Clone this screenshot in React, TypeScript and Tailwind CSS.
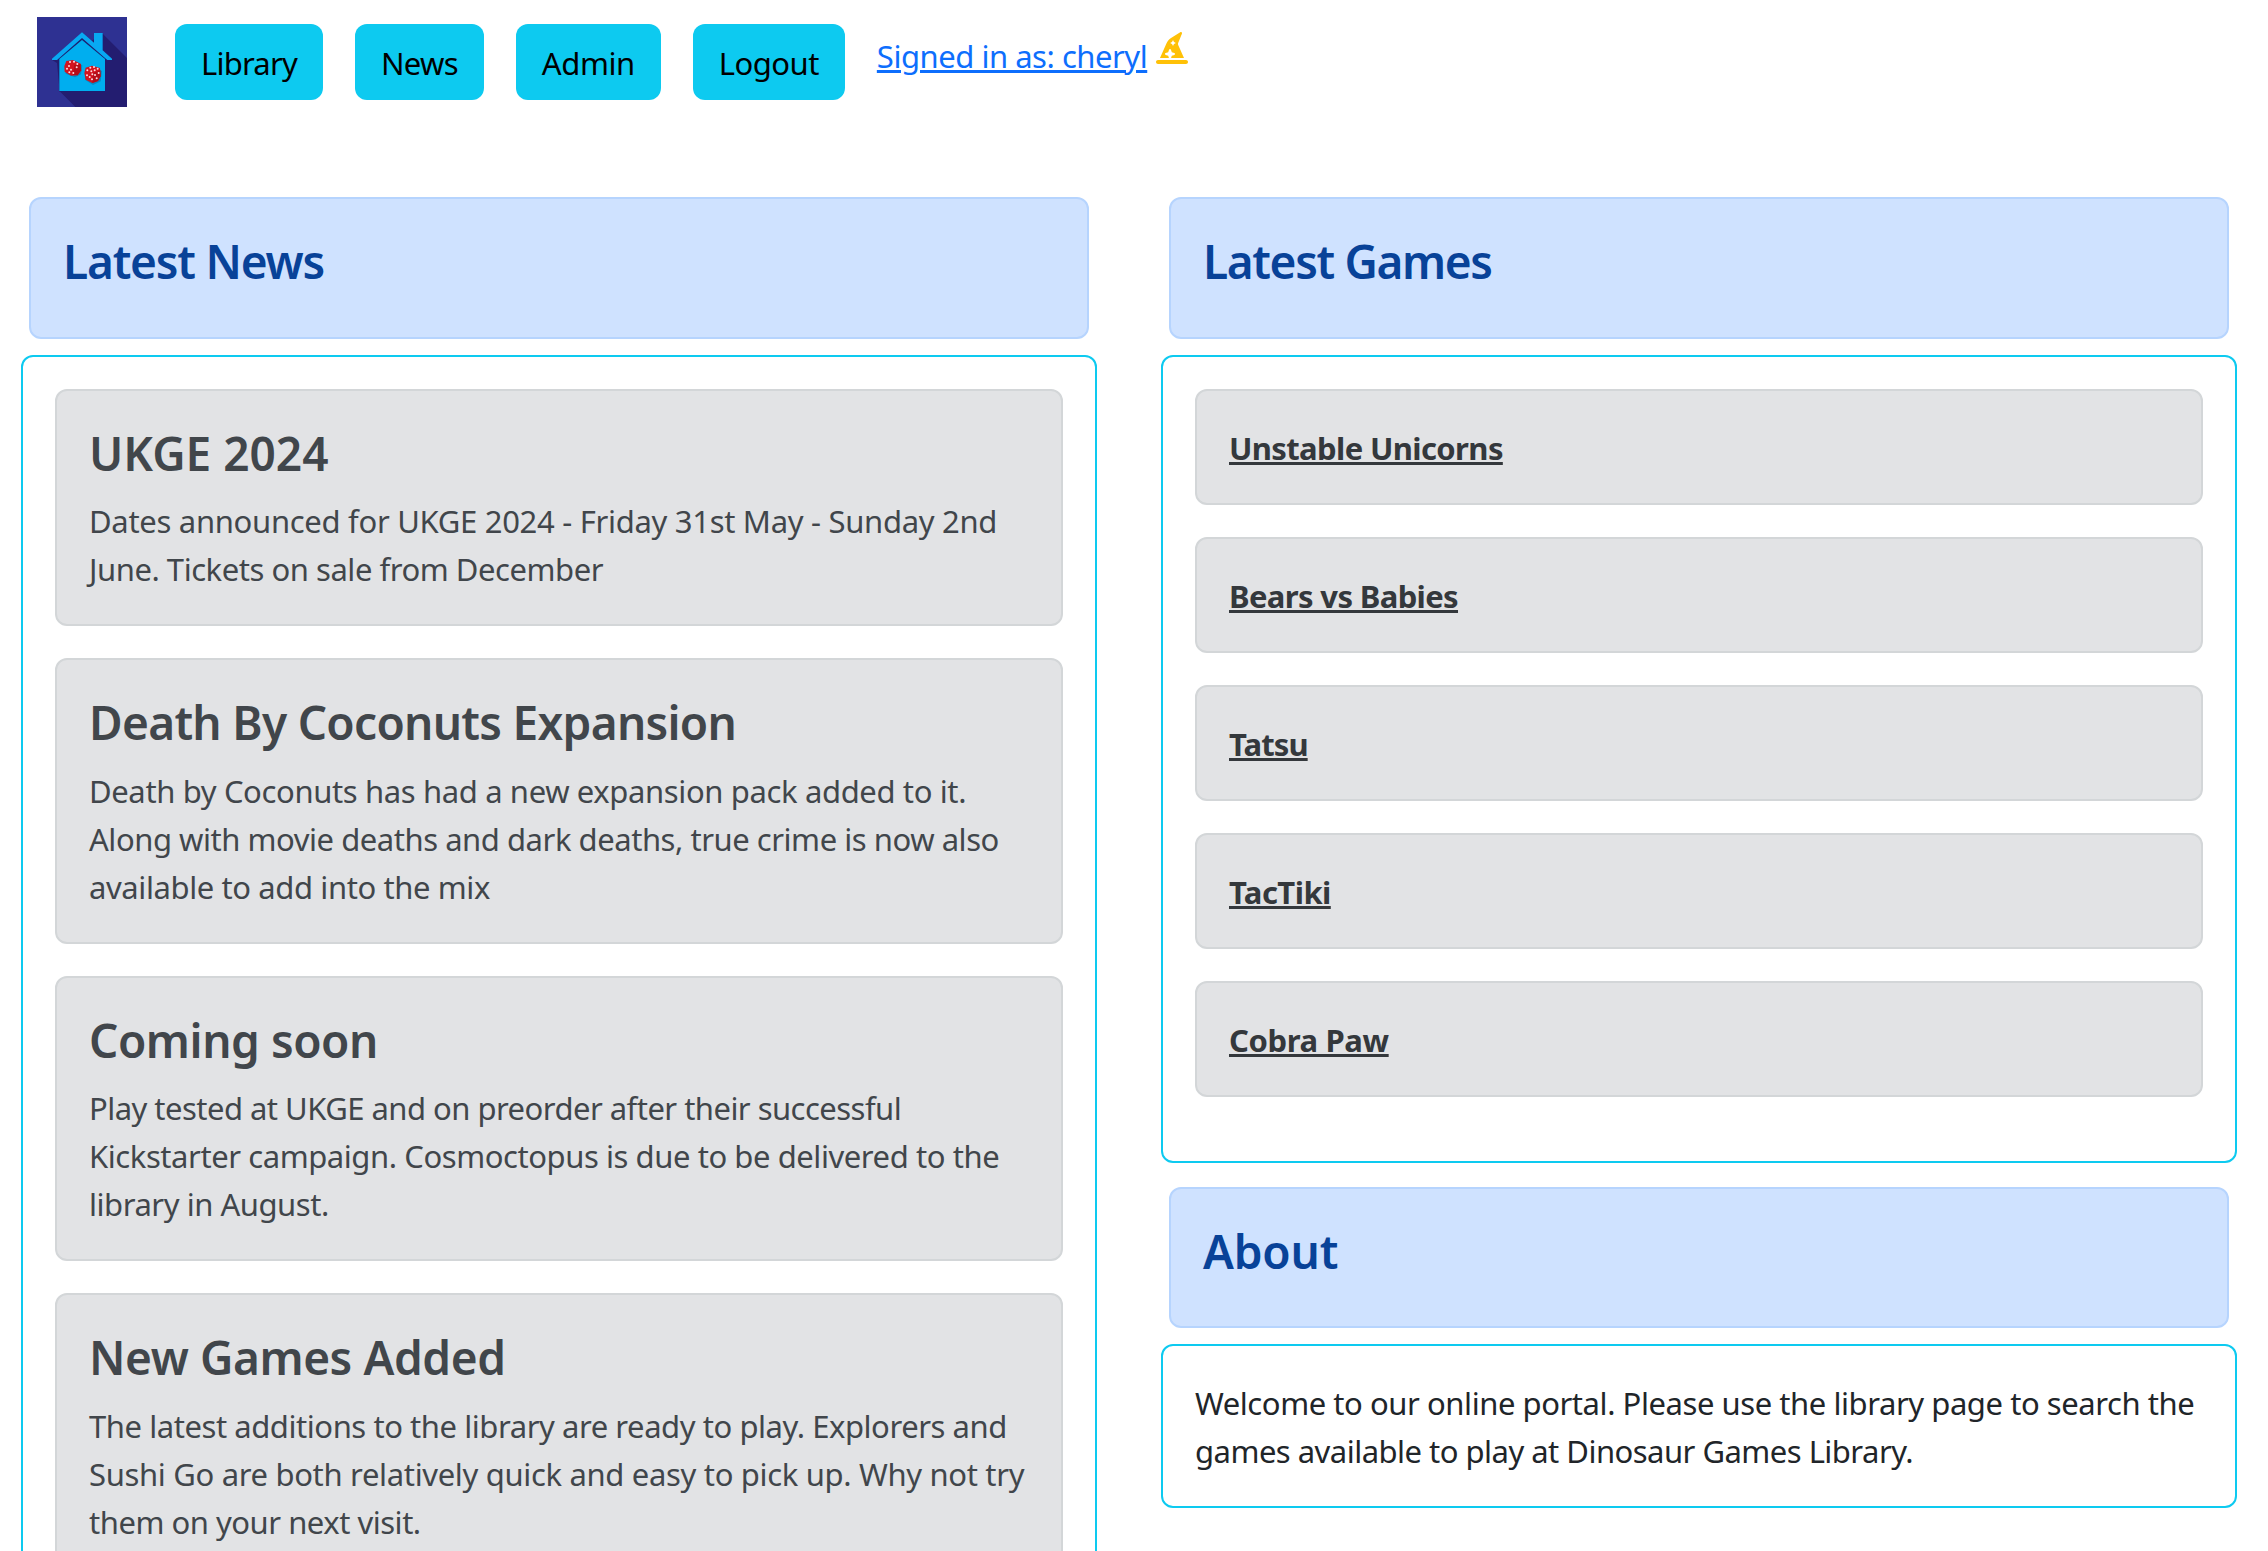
import { FaHatWizard } from 'react-icons/fa6';

type Line = { text: string; tracking: string };
type NewsItem = { title: Line; body: Line[] };

const nav: Line[] = [
  { text: 'Library', tracking: 'tracking-[-0.79px]' },
  { text: 'News', tracking: 'tracking-[-0.7px]' },
  { text: 'Admin', tracking: 'tracking-[-0.4px]' },
  { text: 'Logout', tracking: 'tracking-[-0.53px]' },
];

const news: NewsItem[] = [
  {
    title: { text: 'UKGE 2024', tracking: 'tracking-[0px]' },
    body: [
      { text: 'Dates announced for UKGE 2024 - Friday 31st May - Sunday 2nd', tracking: 'tracking-[-0.3px]' },
      { text: 'June. Tickets on sale from December', tracking: 'tracking-[-0.46px]' },
    ],
  },
  {
    title: { text: 'Death By Coconuts Expansion', tracking: 'tracking-[-0.7px]' },
    body: [
      { text: 'Death by Coconuts has had a new expansion pack added to it.', tracking: 'tracking-[-0.37px]' },
      { text: 'Along with movie deaths and dark deaths, true crime is now also', tracking: 'tracking-[-0.46px]' },
      { text: 'available to add into the mix', tracking: 'tracking-[-0.4px]' },
    ],
  },
  {
    title: { text: 'Coming soon', tracking: 'tracking-[-0.44px]' },
    body: [
      { text: 'Play tested at UKGE and on preorder after their successful', tracking: 'tracking-[-0.53px]' },
      { text: 'Kickstarter campaign. Cosmoctopus is due to be delivered to the', tracking: 'tracking-[-0.43px]' },
      { text: 'library in August.', tracking: 'tracking-[-0.46px]' },
    ],
  },
  {
    title: { text: 'New Games Added', tracking: 'tracking-[-0.42px]' },
    body: [
      { text: 'The latest additions to the library are ready to play. Explorers and', tracking: 'tracking-[-0.44px]' },
      { text: 'Sushi Go are both relatively quick and easy to pick up. Why not try', tracking: 'tracking-[-0.33px]' },
      { text: 'them on your next visit.', tracking: 'tracking-[-0.48px]' },
    ],
  },
];

const games: Line[] = [
  { text: 'Unstable Unicorns', tracking: 'tracking-[-0.62px]' },
  { text: 'Bears vs Babies', tracking: 'tracking-[-0.64px]' },
  { text: 'Tatsu', tracking: 'tracking-[-0.9px]' },
  { text: 'TacTiki', tracking: 'tracking-[-0.55px]' },
  { text: 'Cobra Paw', tracking: 'tracking-[-0.38px]' },
];

const about: Line[] = [
  { text: 'Welcome to our online portal. Please use the library page to search the', tracking: 'tracking-[-0.44px]' },
  { text: 'games available to play at Dinosaur Games Library.', tracking: 'tracking-[-0.52px]' },
];

const dieOnePips = [
  [99, 135], [111, 134], [121, 141], [96, 147], [90, 155], [102, 158], [97, 166], [109, 168], [119, 151],
];
const dieTwoPips = [
  [160, 152], [171, 150], [182, 155], [151, 160], [163, 163], [173, 160], [150, 175], [158, 180], [165, 187],
  [174, 174], [185, 168], [179, 184], [166, 172],
];

function Logo() {
  return (
    <svg viewBox="0 0 270 270" className="mt-[17px] size-[90px] shrink-0">
      <rect width="270" height="270" fill="#2e3192" />
      <path d="M197 50L270 123V270H115L68 223L60 138L45 129L120 100Z" fill="#231d70" />
      <path d="M135 58L60 122L67 131V224H204V131L211 122Z" fill="#1c2070" />
      <path d="M67 126L135 69L204 126V222H67Z" fill="#00aeef" />
      <path d="M135 46L171 77V48H197V100L225 125V129H211L135 63L60 129H45V125Z" fill="#08a9f2" />
      <path d="M88 136L112 132L136 145L132 172L114 181L86 170Z" fill="#0873a8" opacity="0.6" />
      <path d="M146 152L170 150L195 162L191 193L168 204L144 188Z" fill="#0873a8" opacity="0.6" />
      <path d="M88 132L108 129L131 140L133 160L122 175L102 176L83 164L82 147Z" fill="#d3141f" />
      <path d="M112 144L131 141L132 160L122 175L108 173Z" fill="#b50d18" />
      <path d="M146 152L165 146L189 153L191 176L183 192L166 198L146 188L142 168Z" fill="#d3141f" />
      <path d="M168 168L190 160L191 178L183 192L166 198Z" fill="#b50d18" />
      {[...dieOnePips, ...dieTwoPips].map(([x, y]) => (
        <circle key={`${x}-${y}`} cx={x} cy={y} r="3" fill="#ffd9dc" />
      ))}
    </svg>
  );
}

function Lines({ lines }: { lines: Line[] }) {
  return (
    <p className="-mb-px pt-px whitespace-nowrap">
      {lines.map((line) => (
        <span key={line.text} className={`block ${line.tracking}`}>
          {line.text}
        </span>
      ))}
    </p>
  );
}

function Heading({ line }: { line: Line }) {
  return (
    <h2 className={`mb-[14px] pt-[2px] text-[46px] leading-[57.6px] font-semibold whitespace-nowrap ${line.tracking}`}>
      {line.text}
    </h2>
  );
}

function Banner({ line }: { line: Line }) {
  return (
    <div className="mx-2 mb-4 h-[141.6px] rounded-[12px] border-2 border-[#b6d4fe] bg-[#cfe2ff] p-8 text-[#084298]">
      <Heading line={line} />
    </div>
  );
}

export default function App() {
  return (
    <div className="h-[1551px] overflow-hidden bg-white font-['Noto_Sans','Open_Sans',sans-serif] text-[31px] leading-[48px] text-[#212529]">
      <header className="flex h-[197px] items-start pl-[37px]">
        <Logo />
        <nav className="mt-6 ml-12 flex gap-8">
          {nav.map((item) => (
            <a
              key={item.text}
              href="#"
              className={`h-[76px] rounded-[12px] bg-[#0dcaf0] px-[26px] pt-[15px] text-black ${item.tracking}`}
            >
              {item.text}
            </a>
          ))}
        </nav>
        <div className="mt-8 ml-8 flex gap-[9px]">
          <a
            href="#"
            className="tracking-[-0.47px] text-[#0d6efd] underline decoration-[3px] underline-offset-[2px]"
          >
            Signed in as: cheryl
          </a>
          <FaHatWizard className="size-8 text-[#ffc107]" />
        </div>
      </header>

      <main className="flex items-start gap-16 pl-[21px]">
        <section className="w-[1076px]">
          <Banner line={{ text: 'Latest News', tracking: 'tracking-[-1.2px]' }} />
          <div className="flex flex-col gap-8 rounded-[12px] border-2 border-[#0dcaf0] p-8 pb-16">
            {news.map((item) => (
              <article
                key={item.title.text}
                className="rounded-[12px] border-2 border-[#d3d6d8] bg-[#e2e3e5] p-8 text-[#41464b]"
              >
                <Heading line={item.title} />
                <Lines lines={item.body} />
              </article>
            ))}
          </div>
        </section>

        <section className="w-[1076px]">
          <Banner line={{ text: 'Latest Games', tracking: 'tracking-[-1.36px]' }} />
          <div className="mb-6 flex flex-col gap-8 rounded-[12px] border-2 border-[#0dcaf0] p-8 pb-16">
            {games.map((game) => (
              <div
                key={game.text}
                className="h-[116px] rounded-[12px] border-2 border-[#d3d6d8] bg-[#e2e3e5] px-8 pt-[33px]"
              >
                <a
                  href="#"
                  className={`font-bold text-[#34383c] underline decoration-[3px] underline-offset-[2px] ${game.tracking}`}
                >
                  {game.text}
                </a>
              </div>
            ))}
          </div>
          <Banner line={{ text: 'About', tracking: 'tracking-[-0.2px]' }} />
          <div className="rounded-[12px] border-2 border-[#0dcaf0] p-8">
            <Lines lines={about} />
          </div>
        </section>
      </main>
    </div>
  );
}
